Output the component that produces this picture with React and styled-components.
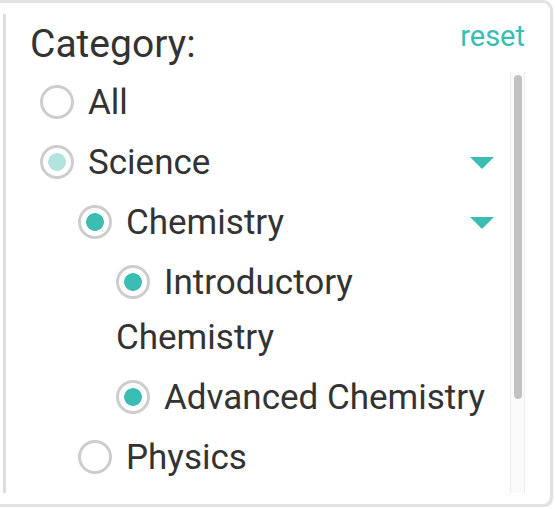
import React from "react";
import styled, { createGlobalStyle } from "styled-components";

const Global = createGlobalStyle`
  html, body { margin: 0; padding: 0; background: #ffffff; }
  body { font-family: Roboto, "Liberation Sans", Arial, sans-serif; color: #333333; overflow: hidden; }
  * { box-sizing: border-box; }
`;

const Card = styled.div`
  margin-left: -12px;
  width: 565px;
  height: 507px;
  border: 3px solid #e1e1e1;
  border-radius: 10px;
  background: #ffffff;
  box-shadow: 0 2px 2px rgba(0, 0, 0, 0.07);
  display: flex;
  flex-direction: column;
`;

const Panel = styled.div`
  margin: 11px 25px 11px 12px;
  flex: 1;
  border-left: 3px solid #dddddd;
  padding-left: 24px;
  display: flex;
  flex-direction: column;
  min-height: 0;
`;

const Header = styled.div`
  display: flex;
  justify-content: space-between;
  align-items: flex-start;
  padding: 7px 0 5px;
`;

const Title = styled.div`
  font-size: 39px;
  line-height: 46px;
  color: #333333;
`;

const Reset = styled.a`
  font-size: 29px;
  line-height: 34px;
  margin-top: -2px;
  color: #3bbdb4;
  cursor: pointer;
`;

const ScrollArea = styled.div`
  flex: 1;
  min-height: 0;
  display: flex;
`;

const List = styled.div`
  flex: 1;
  min-width: 0;
  overflow: hidden;
  padding: 2.5px 0 0 10px;
`;

const Track = styled.div`
  flex: none;
  width: 15px;
  background: #fbfbfb;
  border-left: 1px solid #ededed;
  border-right: 1px solid #ededed;
`;

const Thumb = styled.div`
  width: 8px;
  height: ${(p) => p.$size}px;
  margin: 3px 0 0 3px;
  border-radius: 4px;
  background: #c2c2c2;
`;

const Row = styled.div`
  display: flex;
  align-items: flex-start;
  padding-left: ${(p) => p.$level * 38}px;
  padding-right: 16px;
  margin-bottom: 5px;
`;

const Label = styled.div`
  flex: 1;
  font-size: 35px;
  line-height: 55px;
  color: #333333;
`;

const dotColor = { empty: "transparent", partial: "#b3e3df", checked: "#3bbdb4" };

const Radio = styled.span`
  display: inline-block;
  width: 34px;
  height: 34px;
  border: 3px solid #cdcdcd;
  border-radius: 50%;
  margin-right: 14px;
  vertical-align: -5px;
  background: radial-gradient(circle, ${(p) => dotColor[p.$state]} 0 8.5px, transparent 9.2px);
`;

const Caret = styled.span`
  flex: none;
  width: 0;
  height: 0;
  margin-top: 22px;
  border-left: 12.5px solid transparent;
  border-right: 12.5px solid transparent;
  border-top: 12px solid #3bbdb4;
`;

const items = [
  { label: "All", level: 0, state: "empty" },
  { label: "Science", level: 0, state: "partial", caret: true },
  { label: "Chemistry", level: 1, state: "checked", caret: true },
  { label: "Introductory Chemistry", level: 2, state: "checked" },
  { label: "Advanced Chemistry", level: 2, state: "checked" },
  { label: "Physics", level: 1, state: "empty" },
];

export default function App() {
  return (
    <>
      <Global />
      <Card>
        <Panel>
          <Header>
            <Title>Category:</Title>
            <Reset>reset</Reset>
          </Header>
          <ScrollArea>
            <List>
              {items.map((it) => (
                <Row key={it.label} $level={it.level}>
                  <Label>
                    <Radio $state={it.state} />
                    {it.label}
                  </Label>
                  {it.caret && <Caret />}
                </Row>
              ))}
            </List>
            <Track>
              <Thumb $size={324} />
            </Track>
          </ScrollArea>
        </Panel>
      </Card>
    </>
  );
}
